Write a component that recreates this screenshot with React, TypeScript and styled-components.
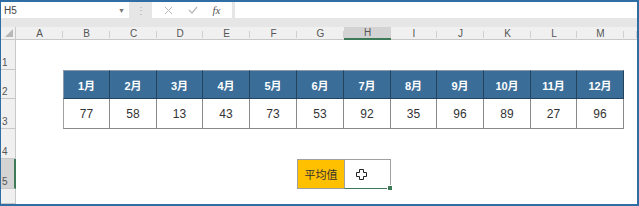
import React from "react";
import styled, { createGlobalStyle } from "styled-components";

const colWidths = [47, 47, 47, 46, 47, 47, 47, 47, 46, 47, 47, 46, 47];
const colNames = ["A", "B", "C", "D", "E", "F", "G", "H", "I", "J", "K", "L", "M"];
const rowHeights = [30, 29, 30, 30, 30];
const months = ["1月", "2月", "3月", "4月", "5月", "6月", "7月", "8月", "9月", "10月", "11月", "12月"];
const values = [77, 58, 13, 43, 73, 53, 92, 35, 96, 89, 27, 96];

const GlobalStyle = createGlobalStyle`
  html, body {
    margin: 0;
    padding: 0;
    background: #fff;
  }
  body {
    font-family: "Liberation Sans", "Noto Sans CJK SC", sans-serif;
  }
`;

const Window = styled.div`
  width: 639px;
  height: 206px;
  box-sizing: border-box;
  border-top: 2px solid #2f6ea5;
  border-left: 1px solid #2f6ea5;
  border-right: 2px solid #2f6ea5;
  border-bottom: 2px solid #2f6ea5;
  background: #e6e6e6;
  display: flex;
  flex-direction: column;
  overflow: hidden;
`;

const FormulaBar = styled.div`
  height: 16px;
  display: flex;
  align-items: stretch;
  gap: 0;
  margin-bottom: 9px;
`;

const NameBox = styled.div`
  width: 128px;
  background: #fff;
  display: flex;
  align-items: center;
  justify-content: space-between;
  padding: 0 4px 0 3px;
  box-sizing: border-box;
  font-size: 10px;
  color: #444;
`;

const Arrow = styled.span`
  font-size: 7px;
  color: #777;
`;

const Grip = styled.div`
  width: 23px;
  display: flex;
  align-items: center;
  justify-content: center;
  color: #b0b0b0;
  font-size: 10px;
`;

const Buttons = styled.div`
  width: 80px;
  background: #fff;
  display: flex;
  align-items: center;
  justify-content: space-around;
  padding: 0 4px;
  box-sizing: border-box;
`;

const FxText = styled.span`
  font-family: "Liberation Serif", serif;
  font-style: italic;
  font-size: 11px;
  color: #555;
`;

const Input = styled.div`
  flex: 1;
  margin-left: 3px;
  background: #fff;
`;

const Sheet = styled.div`
  flex: 1;
  display: grid;
  grid-template-columns: 15px ${colWidths.map((w) => `${w}px`).join(" ")} 1fr;
  grid-template-rows: 13px ${rowHeights.map((h) => `${h}px`).join(" ")} 1fr;
  background: #fff;
`;

const Corner = styled.div`
  background: #f0f0f0;
  border-bottom: 1px solid #c8c8c8;
  border-right: 1px solid #c8c8c8;
  position: relative;
  &::after {
    content: "";
    position: absolute;
    right: 2px;
    bottom: 2px;
    border-left: 8px solid transparent;
    border-bottom: 8px solid #b8b8b8;
  }
`;

const ColHead = styled.div<{ $active?: boolean }>`
  background: ${(p) => (p.$active ? "#d3d3d3" : "#f0f0f0")};
  border-bottom: ${(p) => (p.$active ? "2px solid #3d7a57" : "1px solid #c8c8c8")};
  box-sizing: border-box;
  font-size: 10px;
  color: #555;
  display: flex;
  align-items: center;
  justify-content: center;
  position: relative;
  &::after {
    content: "";
    position: absolute;
    right: 0;
    top: 4px;
    bottom: 1px;
    width: 1px;
    background: #d0d0d0;
  }
`;

const RowHead = styled.div<{ $active?: boolean }>`
  background: ${(p) => (p.$active ? "#d3d3d3" : "#f0f0f0")};
  border-bottom: 1px solid #c8c8c8;
  border-right: ${(p) => (p.$active ? "2px solid #3d7a57" : "1px solid #c8c8c8")};
  box-sizing: border-box;
  font-size: 10px;
  color: #555;
  display: flex;
  align-items: flex-end;
  padding: 0 0 1px 1px;
`;

const Blank = styled.div``;

const MonthCell = styled.div<{ $first?: boolean }>`
  background: #3a6e99;
  border-top: 1px solid #8a9aaa;
  border-right: 1px solid #24435f;
  border-left: ${(p) => (p.$first ? "1px solid #8a9aaa" : "none")};
  border-bottom: 1px solid #24435f;
  box-sizing: border-box;
  color: #fff;
  font-weight: bold;
  font-size: 11px;
  display: flex;
  align-items: center;
  justify-content: center;
`;

const ValueCell = styled.div<{ $first?: boolean }>`
  background: #fff;
  border-right: 1px solid #8a8a8a;
  border-left: ${(p) => (p.$first ? "1px solid #a0a0a0" : "none")};
  border-bottom: 1px solid #8a8a8a;
  box-sizing: border-box;
  color: #333;
  font-size: 12px;
  display: flex;
  align-items: center;
  justify-content: center;
`;

const LabelCell = styled.div`
  background: #ffc000;
  border: 1px solid #a0a0a0;
  border-right: none;
  box-sizing: border-box;
  color: #333;
  font-size: 11px;
  display: flex;
  align-items: center;
  justify-content: center;
`;

const ActiveCell = styled.div`
  background: #fff;
  border: 1px solid #a0a0a0;
  border-bottom: 1px solid #3d7a57;
  box-sizing: border-box;
  position: relative;
  display: flex;
  align-items: center;
  padding-left: 11px;
  &::after {
    content: "";
    position: absolute;
    right: -3px;
    bottom: -3px;
    width: 4px;
    height: 4px;
    background: #3d7a57;
    border: 1px solid #fff;
  }
`;

const CloseIcon = () => (
  <svg width="9" height="9" viewBox="0 0 9 9">
    <path d="M1 1L8 8M8 1L1 8" stroke="#b8b8b8" strokeWidth="1" />
  </svg>
);

const CheckIcon = () => (
  <svg width="10" height="8" viewBox="0 0 10 8">
    <path d="M1 4L4 7L9 1" stroke="#b8b8b8" strokeWidth="1.2" fill="none" />
  </svg>
);

const MoveCursor = () => (
  <svg width="11" height="11" viewBox="0 0 11 11">
    <path
      d="M3.5 0.5H7.5V3.5H10.5V7.5H7.5V10.5H3.5V7.5H0.5V3.5H3.5Z"
      fill="#fff"
      stroke="#222"
      strokeWidth="1"
    />
  </svg>
);

const renderRow = (r: number) => {
  const cells: React.ReactNode[] = [];
  cells.push(
    <RowHead key="h" $active={r === 5}>
      {r}
    </RowHead>
  );
  for (let c = 0; c < 13; c++) {
    const key = `c${c}`;
    if (r === 2 && c > 0) {
      cells.push(
        <MonthCell key={key} $first={c === 1}>
          {months[c - 1]}
        </MonthCell>
      );
    } else if (r === 3 && c > 0) {
      cells.push(
        <ValueCell key={key} $first={c === 1}>
          {values[c - 1]}
        </ValueCell>
      );
    } else if (r === 5 && c === 6) {
      cells.push(<LabelCell key={key}>平均值</LabelCell>);
    } else if (r === 5 && c === 7) {
      cells.push(
        <ActiveCell key={key}>
          <MoveCursor />
        </ActiveCell>
      );
    } else {
      cells.push(<Blank key={key} />);
    }
  }
  cells.push(<Blank key="tail" />);
  return cells;
};

export default function App() {
  return (
    <>
      <GlobalStyle />
      <Window>
        <FormulaBar>
          <NameBox>
            H5
            <Arrow>▼</Arrow>
          </NameBox>
          <Grip>⋮</Grip>
          <Buttons>
            <CloseIcon />
            <CheckIcon />
            <FxText>fx</FxText>
          </Buttons>
          <Input />
        </FormulaBar>
        <Sheet>
          <Corner />
          {colNames.map((n) => (
            <ColHead key={n} $active={n === "H"}>
              {n}
            </ColHead>
          ))}
          <ColHead />
          {[1, 2, 3, 4, 5].map((r) => renderRow(r))}
          <RowHead />
        </Sheet>
      </Window>
    </>
  );
}
